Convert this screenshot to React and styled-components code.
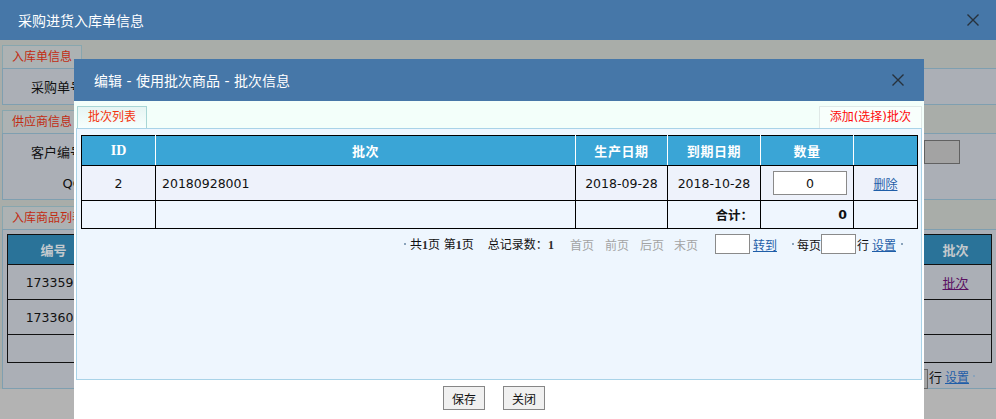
import React from 'react';
import styled, { createGlobalStyle } from 'styled-components';

const GlobalStyle = createGlobalStyle`
    * { box-sizing: border-box; }
    html, body { margin: 0; padding: 0; }
    body {
        font-family: "DejaVu Sans", "Noto Sans CJK SC", sans-serif;
        font-size: 12px;
        color: #111;
    }
`;

const Screen = styled.div`
    position: relative;
    width: 996px;
    height: 419px;
    overflow: hidden;
    background: #b3b3b3;
`;

const TitleBar = styled.div`
    display: flex;
    align-items: center;
    justify-content: space-between;
    height: ${p => p.$h}px;
    padding: ${p => p.$pad};
    background: #4677a8;
    color: #fff;
    font-size: 14px;
`;

/* ---------- dimmed page behind the dialog ---------- */

const OuterBody = styled.div`
    width: 1000px;
    height: 349px;
    padding: 5px 0 0 2px;
    background: #a9ada9;
`;

const Section = styled.section`
    margin-top: ${p => p.$gap}px;
`;

const SectionTab = styled.div`
    display: inline-block;
    vertical-align: top;
    height: 23px;
    line-height: 23px;
    padding: 0 9px;
    border: 1px solid #88a6ae;
    border-bottom: none;
    background: #adb2b3;
    color: #c22c12;
    font-size: 12px;
`;

const SectionBox = styled.div`
    height: ${p => p.$h}px;
    padding-top: ${p => p.$pt || 0}px;
    border: 1px solid #7f9fb0;
    background: #abafb6;
`;

const FieldRow = styled.div`
    display: flex;
    align-items: center;
    height: ${p => p.$h}px;
`;

const FieldLabel = styled.div`
    width: 93px;
    text-align: right;
    font-size: 13px;
    color: #111;
`;

const GreyInput = styled.div`
    width: 36px;
    height: 24px;
    margin: 0 39px 0 auto;
    border: 1px solid #616161;
    background: #a3a3a3;
`;

const BgTable = styled.table`
    width: 984px;
    margin: 4px 0 0 4px;
    border-collapse: collapse;
    table-layout: fixed;

    th {
        height: 30px;
        background: #2a7399;
        color: #c3c9cd;
        font-size: 13px;
        font-weight: bold;
        border: 1px solid #111;
    }

    td {
        border: 1px solid #111;
        text-align: center;
        font-size: 12.5px;
        color: #111;
    }
`;

const BgRow = styled.tr`
    height: ${p => p.$h}px;
`;

const VisitedLink = styled.a`
    color: #5a1061;
    text-decoration: underline;
    font-size: 13px;
`;

const BgPager = styled.div`
    display: flex;
    align-items: center;
    justify-content: flex-end;
    height: 26px;
    padding-right: 24px;
    font-size: 13px;
`;

const BgPagerInput = styled.div`
    width: 30px;
    height: 20px;
    border: 1px solid #666;
    background: #a3a3a3;
    margin-top: 5px;
`;

/* ---------- dialog ---------- */

const Modal = styled.div`
    position: absolute;
    left: 74px;
    top: 59px;
    width: 850px;
    height: 372px;
    background: #fff;
`;

const TabStrip = styled.div`
    display: flex;
    align-items: flex-end;
    justify-content: space-between;
    height: 27px;
    padding: 0 2px 0 3px;
    background: #f3fffa;
`;

const Tab = styled.div`
    height: 22px;
    line-height: 21px;
    padding: 0 10px;
    border: 1px solid ${p => (p.$active ? '#a8d6d5' : '#e0e9e7')};
    border-bottom: none;
    background: ${p => (p.$active ? 'linear-gradient(#e6f5f3, #f7fffd)' : '#f8fffc')};
    color: ${p => (p.$active ? '#f4340c' : '#ff0a0a')};
    font-size: 12px;
`;

const Panel = styled.div`
    height: 252px;
    margin: 0 2px;
    padding: 6px 4px 0;
    border: 1px solid #a9d3e8;
    background: #eef6fe;
`;

const Grid = styled.table`
    width: 100%;
    border-collapse: collapse;
    table-layout: fixed;

    th {
        height: 30px;
        background: #3aa5d6;
        color: #fff;
        font-size: 13px;
        font-weight: bold;
        letter-spacing: 0.6px;
        border: 1px solid #fff;
        border-top: 1px solid #000;
        border-bottom: 1px solid #000;
    }

    th:first-child { border-left: 1px solid #000; }
    th:last-child { border-right: 1px solid #000; }

    td {
        border: 1px solid #000;
        font-size: 12.5px;
        color: #111;
    }
`;

const SerifHead = styled.span`
    font-family: "Liberation Serif", serif;
    font-size: 14px;
    letter-spacing: 0;
`;

const DataRow = styled.tr`
    height: ${p => p.$h}px;
    background: ${p => p.$bg};
`;

const Cell = styled.td`
    text-align: ${p => p.$align || 'center'};
    padding: ${p => p.$pad || '0'};
    font-weight: ${p => (p.$bold ? 'bold' : 'normal')};
`;

const QtyInput = styled.input`
    width: 74px;
    height: 24px;
    border: 1px solid #8a8a8a;
    background: #fff;
    text-align: center;
    font-family: "DejaVu Sans", sans-serif;
    font-size: 12.5px;
    color: #111;
    padding: 0;
`;

const Link = styled.a`
    color: #1f5ea8;
    text-decoration: underline;
    font-size: 12px;
    cursor: pointer;
`;

const Pager = styled.div`
    display: flex;
    align-items: center;
    justify-content: flex-end;
    height: 20px;
    margin-top: 5px;
    padding-right: 14px;
    font-size: 12px;
    white-space: pre;
`;

const PagerItem = styled.span`
    margin-left: ${p => p.$ml || 0}px;
    color: ${p => (p.$disabled ? '#a3a3a3' : '#111')};
`;

const Num = styled.b`
    font-family: "Liberation Serif", serif;
    font-size: 12px;
    color: #2a2a2a;
`;

const Dot = styled.span`
    width: 2px;
    height: 2px;
    margin-left: ${p => p.$ml || 0}px;
    background: #8aa3bb;
`;

const PagerInput = styled.input`
    width: 35px;
    height: 20px;
    margin-left: ${p => p.$ml || 0}px;
    padding: 0;
    border: 1px solid #8a8a8a;
    background: #fff;
`;

const Footer = styled.div`
    display: flex;
    justify-content: center;
    gap: 18px;
    padding: 6px 10px 0 0;
`;

const Button = styled.button`
    width: 42px;
    height: 24px;
    padding: 0;
    border: 1px solid #868686;
    background: #f0f0f0;
    font-family: "Noto Sans CJK SC", sans-serif;
    font-size: 12px;
    color: #111;
`;

const CloseIcon = () => (
    <svg width="12" height="12" viewBox="0 0 12 12">
        <path d="M0.5 0.5L11.5 11.5M11.5 0.5L0.5 11.5" stroke="#27313c" strokeWidth="1.4" fill="none" />
    </svg>
);

const columns = [
    { title: <SerifHead>ID</SerifHead>, width: 74 },
    { title: '批次', width: 420 },
    { title: '生产日期', width: 92 },
    { title: '到期日期', width: 93 },
    { title: '数量', width: 93 },
    { title: '', width: 64 },
];

const batches = [
    { id: 2, code: '20180928001', made: '2018-09-28', expire: '2018-10-28', qty: 0 },
];

const BatchDialog = () => (
    <Modal>
        <TitleBar $h={42} $pad="0 20px">
            <span>编辑 - 使用批次商品 - 批次信息</span>
            <CloseIcon />
        </TitleBar>
        <TabStrip>
            <Tab $active>批次列表</Tab>
            <Tab>添加(选择)批次</Tab>
        </TabStrip>
        <Panel>
            <Grid>
                <colgroup>
                    {columns.map((c, i) => <col key={i} style={{ width: c.width }} />)}
                </colgroup>
                <thead>
                    <tr>
                        {columns.map((c, i) => <th key={i}>{c.title}</th>)}
                    </tr>
                </thead>
                <tbody>
                    {batches.map(b => (
                        <DataRow key={b.id} $h={35} $bg="#eef2fb">
                            <Cell>{b.id}</Cell>
                            <Cell $align="left" $pad="0 0 0 6px">{b.code}</Cell>
                            <Cell>{b.made}</Cell>
                            <Cell>{b.expire}</Cell>
                            <Cell $pad="0 0 0 6px"><QtyInput defaultValue={b.qty} /></Cell>
                            <Cell><Link>删除</Link></Cell>
                        </DataRow>
                    ))}
                    <DataRow $h={28} $bg="#eff6fe">
                        <Cell />
                        <Cell />
                        <Cell />
                        <Cell $align="right" $pad="0 7px 0 0" $bold>合计：</Cell>
                        <Cell $align="right" $pad="0 6px 0 0" $bold>0</Cell>
                        <Cell />
                    </DataRow>
                </tbody>
            </Grid>
            <Pager>
                <Dot />
                <PagerItem $ml={4}>共<Num>1</Num>页 第<Num>1</Num>页</PagerItem>
                <PagerItem $ml={14}>总记录数：<Num>1</Num></PagerItem>
                <PagerItem $ml={16} $disabled>首页</PagerItem>
                <PagerItem $ml={11} $disabled>前页</PagerItem>
                <PagerItem $ml={11} $disabled>后页</PagerItem>
                <PagerItem $ml={10} $disabled>末页</PagerItem>
                <PagerInput $ml={17} />
                <PagerItem $ml={3}><Link>转到</Link></PagerItem>
                <Dot $ml={15} />
                <PagerItem $ml={3}>每页</PagerItem>
                <PagerInput />
                <PagerItem $ml={1}>行</PagerItem>
                <PagerItem $ml={3}><Link>设置</Link></PagerItem>
                <Dot $ml={5} />
            </Pager>
        </Panel>
        <Footer>
            <Button>保存</Button>
            <Button>关闭</Button>
        </Footer>
    </Modal>
);

const App = () => (
    <Screen>
        <GlobalStyle />
        <TitleBar $h={40} $pad="0 17px 0 18px">
            <span>采购进货入库单信息</span>
            <CloseIcon />
        </TitleBar>
        <OuterBody>
            <Section $gap={0}>
                <SectionTab>入库单信息</SectionTab>
                <SectionBox $h={37}>
                    <FieldRow $h={35}>
                        <FieldLabel>采购单号：</FieldLabel>
                    </FieldRow>
                </SectionBox>
            </Section>
            <Section $gap={5}>
                <SectionTab>供应商信息</SectionTab>
                <SectionBox $h={67} $pt={2}>
                    <FieldRow $h={31}>
                        <FieldLabel>客户编号：</FieldLabel>
                        <GreyInput />
                    </FieldRow>
                    <FieldRow $h={31}>
                        <FieldLabel>QQ：</FieldLabel>
                    </FieldRow>
                </SectionBox>
            </Section>
            <Section $gap={6}>
                <SectionTab>入库商品列表</SectionTab>
                <SectionBox $h={160}>
                    <BgTable>
                        <colgroup>
                            <col style={{ width: 92 }} />
                            <col style={{ width: 820 }} />
                            <col style={{ width: 72 }} />
                        </colgroup>
                        <thead>
                            <tr>
                                <th>编号</th>
                                <th />
                                <th>批次</th>
                            </tr>
                        </thead>
                        <tbody>
                            <BgRow $h={35}>
                                <td>1733591</td>
                                <td />
                                <td><VisitedLink>批次</VisitedLink></td>
                            </BgRow>
                            <BgRow $h={35}>
                                <td>1733601</td>
                                <td />
                                <td />
                            </BgRow>
                            <BgRow $h={28}>
                                <td />
                                <td />
                                <td />
                            </BgRow>
                        </tbody>
                    </BgTable>
                    <BgPager>
                        <BgPagerInput />
                        <PagerItem $ml={1}>行</PagerItem>
                        <PagerItem $ml={3}><Link>设置</Link></PagerItem>
                        <Dot $ml={4} />
                    </BgPager>
                </SectionBox>
            </Section>
        </OuterBody>
        <BatchDialog />
    </Screen>
);

export default App;
